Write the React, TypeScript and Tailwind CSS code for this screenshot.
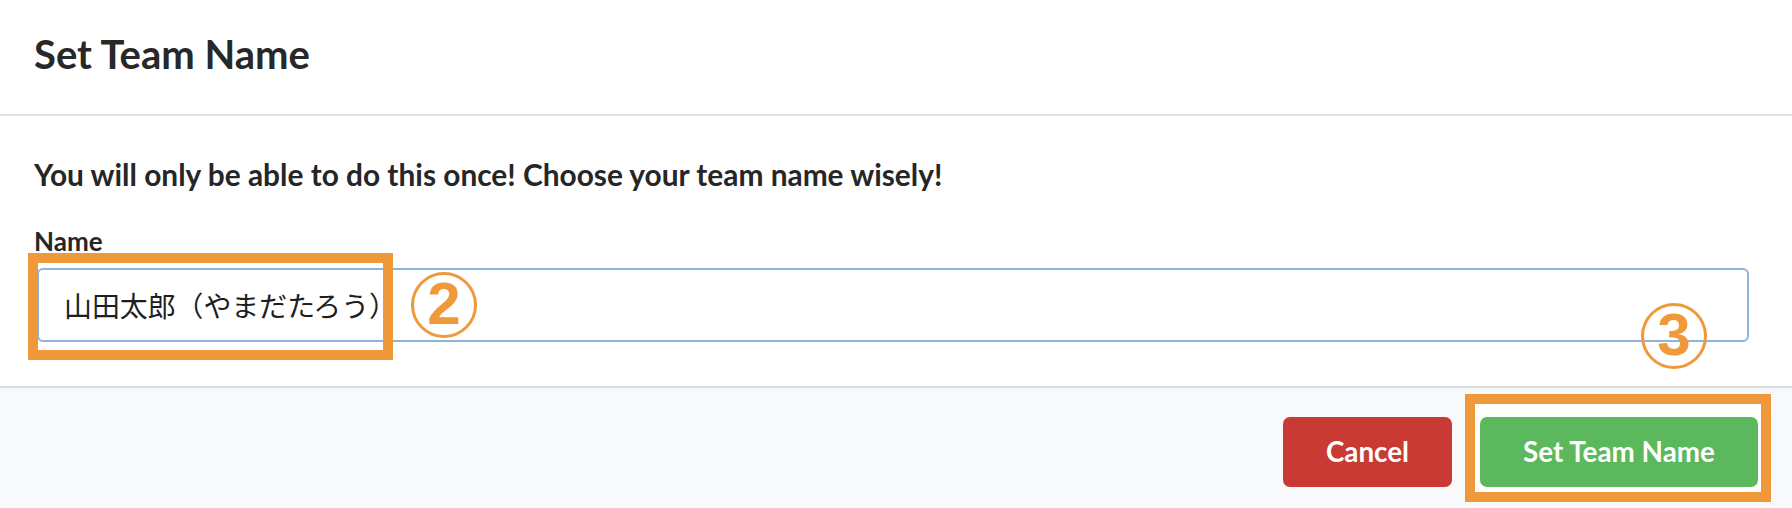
import React from "react";

function Circled({ n, className }: { n: string; className: string }) {
  return (
    <span
      className={
        "absolute flex h-[66px] w-[66px] items-center justify-center rounded-full border-[3px] border-[#f0993a] text-[#f0993a] font-['Liberation_Sans',sans-serif] text-[60px] font-bold leading-none pointer-events-none " +
        className
      }
    >
      <span className="-mt-[2px]">{n}</span>
    </span>
  );
}

export default function App() {
  return (
    <div className="flex h-[508px] w-[1792px] flex-col overflow-hidden bg-white font-['Lato','Noto_Sans_CJK_JP',sans-serif] text-[#262626]">
      {/* Header */}
      <div className="h-[116px] shrink-0 border-b-2 border-[#e0e0e0] px-[34px] pt-[31px]">
        <h1 className="text-[40px] font-bold leading-[47px] text-[#282828]">Set Team Name</h1>
      </div>

      {/* Body */}
      <div className="relative h-[270px] shrink-0 px-[34px] pt-[41px]">
        <p className="text-[29.85px] font-bold leading-[36px]">
          You will only be able to do this once! Choose your team name wisely!
        </p>
        <label className="mt-[32px] mb-[11px] block text-[26px] font-bold leading-[32px]">Name</label>
        <div className="relative ml-[3px] mr-[9px]">
          <input
            readOnly
            value="山田太郎（やまだたろう）"
            className="block h-[74px] w-full rounded-[6px] border-2 border-[#8fb4da] bg-white px-[25px] font-['Noto_Sans_CJK_JP',sans-serif] text-[27.9px] text-[#1e1e1e] outline-none"
          />
        </div>
        {/* annotation box around input text */}
        <span className="pointer-events-none absolute left-[28px] top-[137px] h-[107px] w-[365px] border-[10px] border-[#f0993a]" />
        <Circled n="2" className="left-[411px] top-[156px]" />
        <Circled n="3" className="left-[1641px] top-[187px]" />
      </div>

      {/* Footer */}
      <div className="flex flex-1 items-start justify-end gap-[28px] border-t-2 border-[#d9dce0] bg-[#f8f9fb] px-[34px] pt-[29px]">
        <button className="h-[70px] w-[169px] rounded-[7px] bg-[#c93a34] text-[27.8px] font-bold text-white">
          Cancel
        </button>
        <div className="relative">
          <span className="absolute -left-[15px] -top-[23px] -right-[13px] -bottom-[15px] border-[10px] border-[#f0993a] bg-white" />
          <button className="relative h-[70px] w-[278px] rounded-[7px] bg-[#5cb85c] text-[27.8px] font-bold text-white">
            Set Team Name
          </button>
        </div>
      </div>
    </div>
  );
}
